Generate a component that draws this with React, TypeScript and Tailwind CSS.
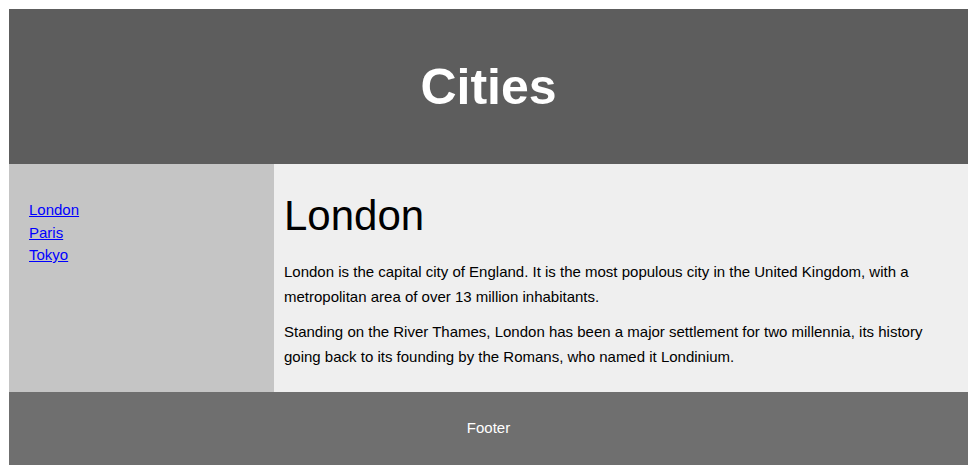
export default function App() {
  return (
    <div
      className="bg-white pl-[9px] pt-[9px] pr-[11px] pb-[8px] text-black"
      style={{ fontFamily: '"Liberation Sans", Arial, sans-serif' }}
    >
      <header className="flex h-[155px] items-center justify-center bg-[#5d5d5d]">
        <h2 className="text-[50px] font-bold leading-none text-white">Cities</h2>
      </header>

      <section className="flex h-[228px]">
        <nav className="w-[265px] shrink-0 bg-[#c5c5c5] pl-[20px] pt-[35px]">
          <ul className="text-[15px] leading-[22.5px]">
            <li>
              <a href="#" className="text-[#0000ff] underline">London</a>
            </li>
            <li>
              <a href="#" className="text-[#0000ff] underline">Paris</a>
            </li>
            <li>
              <a href="#" className="text-[#0000ff] underline">Tokyo</a>
            </li>
          </ul>
        </nav>

        <article className="flex-1 bg-[#efefef] pl-[10px] pr-[20px] pt-[28px]">
          <h1 className="text-[42px] leading-[48px]">London</h1>
          <p className="mt-[19px] text-[15px] leading-[25px]">
            London is the capital city of England. It is the most populous city in the United
            Kingdom, with a metropolitan area of over 13 million inhabitants.
          </p>
          <p className="mt-[10px] text-[15px] leading-[25px]">
            Standing on the River Thames, London has been a major settlement for two millennia, its
            history going back to its founding by the Romans, who named it Londinium.
          </p>
        </article>
      </section>

      <footer className="flex h-[73px] items-center justify-center bg-[#6f6f6f] text-[15px] text-white">
        <p>Footer</p>
      </footer>
    </div>
  );
}
